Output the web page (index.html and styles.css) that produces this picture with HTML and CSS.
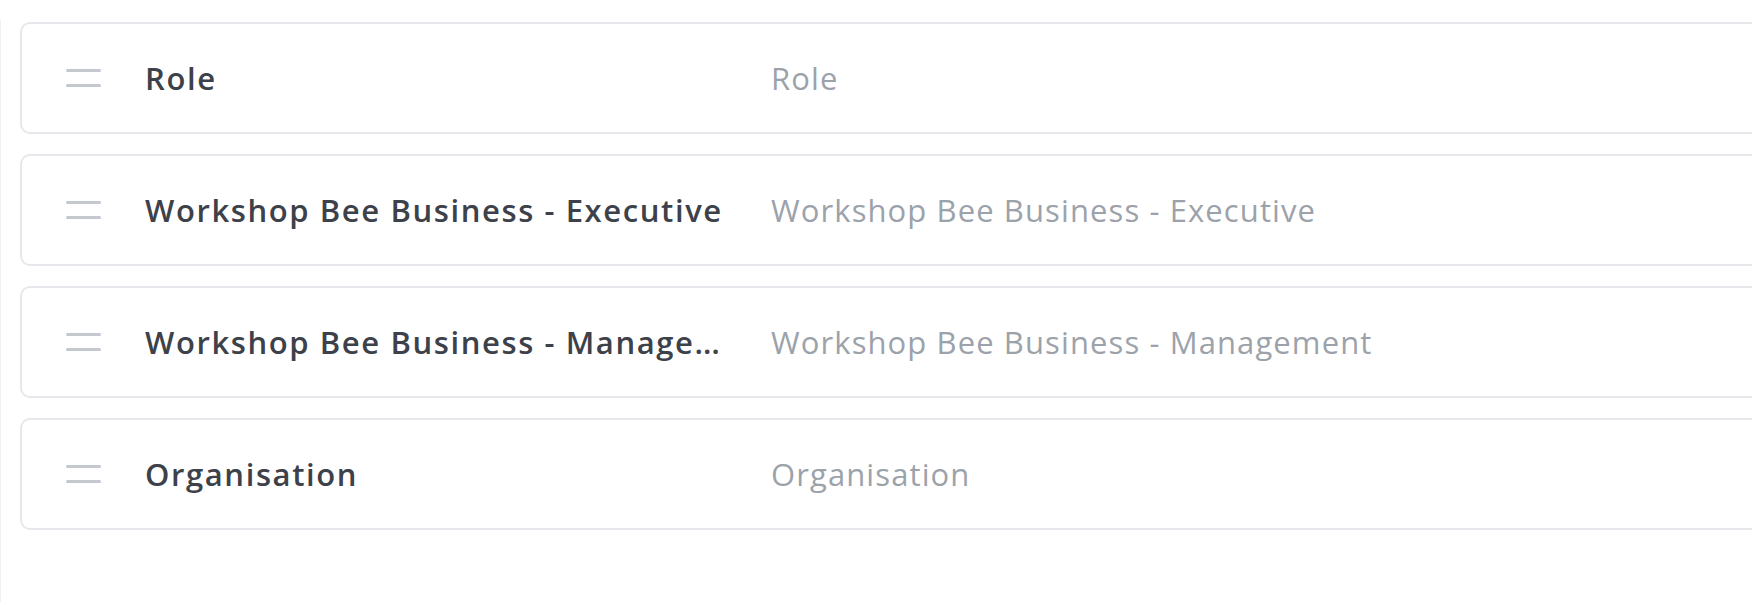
FILE: index.html
```html
<!DOCTYPE html>
<html>
<head>
<meta charset="utf-8">
<link rel="stylesheet" href="styles.css">
</head>
<body>
<div class="panel">
  <div class="list">
    <div class="row">
      <span class="handle"><svg width="35" height="20" viewBox="0 0 35 20"><rect x="0" y="1" width="35" height="3" rx="1.5"/><rect x="0" y="16" width="35" height="3" rx="1.5"/></svg></span>
      <span class="label">Role</span>
      <span class="value">Role</span>
    </div>
    <div class="row">
      <span class="handle"><svg width="35" height="20" viewBox="0 0 35 20"><rect x="0" y="1" width="35" height="3" rx="1.5"/><rect x="0" y="16" width="35" height="3" rx="1.5"/></svg></span>
      <span class="label">Workshop Bee Business - Executive</span>
      <span class="value">Workshop Bee Business - Executive</span>
    </div>
    <div class="row">
      <span class="handle"><svg width="35" height="20" viewBox="0 0 35 20"><rect x="0" y="1" width="35" height="3" rx="1.5"/><rect x="0" y="16" width="35" height="3" rx="1.5"/></svg></span>
      <span class="label">Workshop Bee Business - Management</span>
      <span class="value">Workshop Bee Business - Management</span>
    </div>
    <div class="row">
      <span class="handle"><svg width="35" height="20" viewBox="0 0 35 20"><rect x="0" y="1" width="35" height="3" rx="1.5"/><rect x="0" y="16" width="35" height="3" rx="1.5"/></svg></span>
      <span class="label">Organisation</span>
      <span class="value">Organisation</span>
    </div>
  </div>
</div>
</body>
</html>
```
FILE: styles.css
```css
html, body {
  margin: 0;
  padding: 0;
  background: #ffffff;
  overflow: hidden;
}
body {
  font-family: "Open Sans", "Liberation Sans", sans-serif;
  height: 602px;
}
.panel {
  margin-top: 20px;
  border-left: 1px solid #f0f1f3;
  height: 582px;
  padding: 2px 0 0 19px;
  box-sizing: border-box;
}
.list {
  width: 1900px;
  display: flex;
  flex-direction: column;
  gap: 20px;
}
.row {
  height: 112px;
  box-sizing: border-box;
  border: 2px solid #e6e8eb;
  border-radius: 10px;
  display: flex;
  align-items: center;
  padding-left: 44px;
}
.handle {
  width: 35px;
  height: 20px;
  display: flex;
  fill: #c3c9cf;
  margin-right: 44px;
}
.label {
  width: 582px;
  flex: none;
  font-size: 31px;
  letter-spacing: 1.6px;
  font-weight: 600;
  color: #3d4149;
  white-space: nowrap;
  overflow: hidden;
  text-overflow: ellipsis;
  margin-right: 44px;
}
.value {
  font-size: 31px;
  letter-spacing: 1.1px;
  color: #9ca2aa;
  white-space: nowrap;
}
```
